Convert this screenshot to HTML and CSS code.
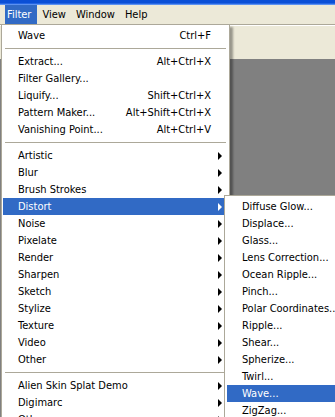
FILE: index.html
```html
<!DOCTYPE html>
<html lang="en">
<head>
    <meta charset="UTF-8">
    <title>Filter Menu</title>
    <link rel="stylesheet" href="styles.css">
</head>
<body>
    <div class="titlebar"></div>
    <div class="menubar">
        <span class="menubar-item active">Filter</span>
        <span class="menubar-item">View</span>
        <span class="menubar-item">Window</span>
        <span class="menubar-item">Help</span>
    </div>
    <div class="optionsbar"></div>
    <div class="workspace"></div>

    <!-- Filter menu -->
    <div class="menu main-menu">
        <div class="item"><span>Wave</span><span class="key">Ctrl+F</span></div>
        <div class="sep"></div>
        <div class="item"><span>Extract...</span><span class="key">Alt+Ctrl+X</span></div>
        <div class="item"><span>Filter Gallery...</span></div>
        <div class="item"><span>Liquify...</span><span class="key">Shift+Ctrl+X</span></div>
        <div class="item"><span>Pattern Maker...</span><span class="key">Alt+Shift+Ctrl+X</span></div>
        <div class="item"><span>Vanishing Point...</span><span class="key">Alt+Ctrl+V</span></div>
        <div class="sep"></div>
        <div class="item sub"><span>Artistic</span><i class="arrow"></i></div>
        <div class="item sub"><span>Blur</span><i class="arrow"></i></div>
        <div class="item sub"><span>Brush Strokes</span><i class="arrow"></i></div>
        <div class="item sub selected"><span>Distort</span><i class="arrow"></i></div>
        <div class="item sub"><span>Noise</span><i class="arrow"></i></div>
        <div class="item sub"><span>Pixelate</span><i class="arrow"></i></div>
        <div class="item sub"><span>Render</span><i class="arrow"></i></div>
        <div class="item sub"><span>Sharpen</span><i class="arrow"></i></div>
        <div class="item sub"><span>Sketch</span><i class="arrow"></i></div>
        <div class="item sub"><span>Stylize</span><i class="arrow"></i></div>
        <div class="item sub"><span>Texture</span><i class="arrow"></i></div>
        <div class="item sub"><span>Video</span><i class="arrow"></i></div>
        <div class="item sub"><span>Other</span><i class="arrow"></i></div>
        <div class="sep"></div>
        <div class="item sub"><span>Alien Skin Splat Demo</span><i class="arrow"></i></div>
        <div class="item sub"><span>Digimarc</span><i class="arrow"></i></div>
        <div class="item sub"><span>Other</span><i class="arrow"></i></div>
    </div>

    <!-- Distort submenu -->
    <div class="menu sub-menu">
        <div class="item"><span>Diffuse Glow...</span></div>
        <div class="item"><span>Displace...</span></div>
        <div class="item"><span>Glass...</span></div>
        <div class="item"><span>Lens Correction...</span></div>
        <div class="item"><span>Ocean Ripple...</span></div>
        <div class="item"><span>Pinch...</span></div>
        <div class="item"><span>Polar Coordinates...</span></div>
        <div class="item"><span>Ripple...</span></div>
        <div class="item"><span>Shear...</span></div>
        <div class="item"><span>Spherize...</span></div>
        <div class="item"><span>Twirl...</span></div>
        <div class="item selected"><span>Wave...</span></div>
        <div class="item"><span>ZigZag...</span></div>
    </div>
</body>
</html>
```
FILE: styles.css
```css
body {
    margin: 0;
    width: 335px;
    height: 417px;
    overflow: hidden;
    position: relative;
    font-family: 'DejaVu Sans Condensed', 'Liberation Sans', sans-serif;
    font-size: 11px;
    color: #000;
    background-color: #808080;
}
.titlebar {
    height: 5px;
    background: linear-gradient(#0a4fd6, #0a4fd6 3px, #3d7cf0 4px, #7aa6f0);
}
.menubar {
    height: 19px;
    display: flex;
    align-items: stretch;
    padding-left: 5px;
    background-color: #ece9d8;
}
.menubar-item {
    display: flex;
    align-items: center;
    padding: 0 5px;
}
.menubar-item.active {
    padding: 0 6px 0 2px;
    background-color: #316ac5;
    color: #fff;
}
.optionsbar {
    height: 34px;
    background-color: #ece9d8;
    border-top: 1px solid #aca899;
    box-shadow: inset 0 1px 0 #fff;
}
.workspace {
    height: 358px;
    background-color: #808080;
}
.menu {
    position: absolute;
    box-sizing: border-box;
    background: #fff;
    border: 1px solid #aca899;
    box-shadow: 3px 3px 2px rgba(0, 0, 0, 0.35);
}
.main-menu {
    left: 1px;
    top: 24px;
    width: 229px;
    padding: 2px 1px;
}
.sub-menu {
    left: 224px;
    top: 195px;
    width: 140px;
    padding: 2px 2px;
}
.item {
    height: 17px;
    display: flex;
    align-items: center;
    justify-content: space-between;
    padding: 0 17px 0 15px;
    white-space: nowrap;
}
.item.sub {
    padding-right: 6px;
}
.item.selected {
    background-color: #316ac5;
    color: #fff;
}
.sep {
    height: 1px;
    margin: 4px 2px;
    background-color: #aca899;
}
.arrow {
    width: 0;
    height: 0;
    border-left: 4px solid #000;
    border-top: 4px solid transparent;
    border-bottom: 4px solid transparent;
}
.item.selected .arrow {
    border-left-color: #fff;
}
```
